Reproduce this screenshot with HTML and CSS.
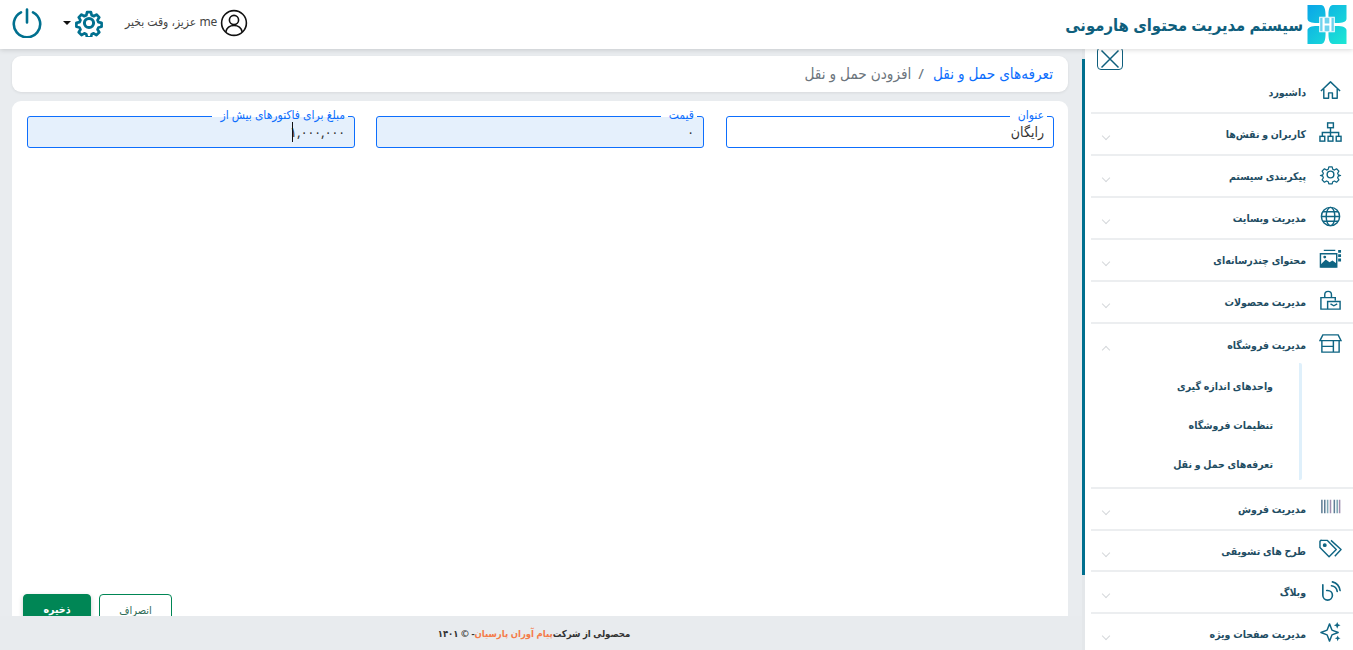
FILE: index.html
```html
<!DOCTYPE html>
<html lang="fa" dir="rtl">
<head>
<meta charset="UTF-8">
<title>سیستم مدیریت محتوای هارمونی</title>
<link rel="stylesheet" href="styles.css">
</head>
<body>
<header class="topbar">
	<div class="brand">
		<svg class="logo" viewBox="0 0 40 40">
			<defs><linearGradient id="lg" gradientUnits="userSpaceOnUse" x1="0" y1="0" x2="40" y2="40"><stop offset="0" stop-color="#0aa5e8"/><stop offset="1" stop-color="#1de8d4"/></linearGradient></defs>
			<path fill="url(#lg)" d="M0 0H14C17 0 18.500 4 18.500 10V12H12V18.500H10C4 18.500 0 17 0 14ZM40 0H26C23 0 21.500 4 21.500 10V12H28V18.500H30C36 18.500 40 17 40 14ZM0 40H14C17 40 18.500 36 18.500 30V28H12V21.500H10C4 21.500 0 23 0 26ZM40 40H26C23 40 21.500 36 21.500 30V28H28V21.500H30C36 21.500 40 23 40 26Z"/>
			<rect x="13" y="13" width="14" height="14" fill="#6fd3ee"/>
			<path fill="none" stroke="#fff" stroke-width="2.200" d="M16.500 13v14M23.500 13v14M16.500 20h7"/>
		</svg>
		<span class="brand-name">سیستم مدیریت محتوای هارمونی</span>
	</div>
	<div class="userbar">
		<svg class="avatar" viewBox="0 0 28 28" fill="none" stroke="#111" stroke-width="1.6">
			<circle cx="14" cy="14" r="12.4"/><circle cx="14" cy="11" r="4.6"/><path d="M5.8 23c1-4.600 4-6.500 8.200-6.500s7.200 1.900 8.200 6.500"/>
		</svg>
		<span class="greeting">me عزیز، وقت بخیر</span>
		<div class="tools">
			<svg class="gear" viewBox="0 0 28 28" fill="none" stroke="#00708f" stroke-width="3" stroke-linejoin="round">
				<circle cx="14" cy="14" r="4.600"/>
				<path d="M11.800 2h4.400l.8 3.500 2.200 1 3.100-1.900 3.100 3.100-1.900 3.100 1 2.200 3.500.8v4.400l-3.500.8-1 2.200 1.900 3.100-3.100 3.100-3.100-1.900-2.200 1-.8 3.500h-4.400l-.8-3.500-2.200-1-3.100 1.900-3.100-3.100 1.900-3.100-1-2.200-3.500-.8v-4.400l3.500-.8 1-2.200-1.900-3.100 3.100-3.100 3.100 1.900 2.200-1z" transform="translate(1.400 1.400) scale(.9)"/>
			</svg>
			<span class="caret-down"></span>
		</div>
		<svg class="power" viewBox="0 0 30 30" fill="none" stroke="#00708f" stroke-width="2.600" stroke-linecap="round">
			<path d="M15 1.500v13M9 4.300a13.200 13.200 0 1 0 12 0"/>
		</svg>
	</div>
</header>

<div class="layout">
	<aside class="sidebar">
		<nav class="nav">
			<div class="close-row">
				<button class="close-btn"><svg viewBox="0 0 20 20" fill="none" stroke="#0f5f7d" stroke-width="1.500"><path d="M1.500 1.500l17 17M18.500 1.500l-17 17"/></svg></button>
			</div>
			<div class="nav-item">
				<svg class="nav-icon" viewBox="0 0 24 24" fill="none" stroke="#0f6583" stroke-width="1.500" stroke-linejoin="round"><path d="M2 12.500L12 3l10 9.500M5 10.500V20h5v-5.500h4V20h5v-9.500"/></svg>
				<span class="nav-label">داشبورد</span>
			</div>
			<div class="nav-item">
				<svg class="nav-icon" viewBox="0 0 24 24" fill="none" stroke="#0f6583" stroke-width="1.500"><rect x="9" y="2" width="6" height="5"/><rect x="1" y="16" width="5" height="5"/><rect x="9.500" y="16" width="5" height="5"/><rect x="18" y="16" width="5" height="5"/><path d="M12 7v9M3.500 16v-4h17v4"/></svg>
				<span class="nav-label">کاربران و نقش‌ها</span>
				<span class="chev"></span>
			</div>
			<div class="nav-item">
				<svg class="nav-icon" viewBox="0 0 24 24" fill="none" stroke="#0f6583" stroke-width="1.500" stroke-linejoin="round"><circle cx="12" cy="12" r="3.500"/><path d="M10 3h4l.7 2.800 2 .9 2.500-1.500 2.800 2.800-1.500 2.500.9 2 2.600.7v0l-2.600.7-.9 2 1.500 2.500-2.800 2.800-2.500-1.500-2 .9-.7 2.600h-4l-.7-2.600-2-.9-2.500 1.500-2.800-2.800 1.500-2.500-.9-2-2.600-.7v0l2.600-.7.900-2-1.500-2.500 2.800-2.800 2.500 1.500 2-.9z" transform="translate(1.500 1.500) scale(.875)"/></svg>
				<span class="nav-label">پیکربندی سیستم</span>
				<span class="chev"></span>
			</div>
			<div class="nav-item">
				<svg class="nav-icon" viewBox="0 0 24 24" fill="none" stroke="#0f6583" stroke-width="1.500"><circle cx="12" cy="12" r="9.500"/><ellipse cx="12" cy="12" rx="4.500" ry="9.500"/><path d="M2.500 12h19M4 7h16M4 17h16"/></svg>
				<span class="nav-label">مدیریت وبسایت</span>
				<span class="chev"></span>
			</div>
			<div class="nav-item">
				<svg class="nav-icon" viewBox="0 0 24 24"><path fill="none" stroke="#0f6583" stroke-width="1.500" d="M1.500 7h17v14h-17zM5 3.500h12"/><path fill="#0f6583" d="M2 21v-3l5-5 4 3 3-2 4 3v4z"/><path fill="#0f6583" d="M20 3h3v3h-3zM20 7.500h3v3h-3zM20 12h3v3h-3z"/><circle cx="6" cy="10.500" r="1.500" fill="#0f6583"/></svg>
				<span class="nav-label">محتوای چندرسانه‌ای</span>
				<span class="chev"></span>
			</div>
			<div class="nav-item">
				<svg class="nav-icon" viewBox="0 0 24 24" fill="none" stroke="#0f6583" stroke-width="1.500"><path d="M9 21H2V9h15v3M6 9V6a3.500 3.500 0 0 1 7 0v3M9 13h13v8H9zM12 15.500l3.500 2 3.500-2"/></svg>
				<span class="nav-label">مدیریت محصولات</span>
				<span class="chev"></span>
			</div>
			<div class="nav-item nav-item-open">
				<div class="nav-row">
					<svg class="nav-icon" viewBox="0 0 24 24" fill="none" stroke="#0f6583" stroke-width="1.500"><path d="M1 9l3-6h16l3 6zM3 9v12h18V9M3 15h12M15 9v12"/></svg>
					<span class="nav-label">مدیریت فروشگاه</span>
					<span class="chev chev-up"></span>
				</div>
				<ul class="subnav">
					<li>واحدهای اندازه گیری</li>
					<li>تنظیمات فروشگاه</li>
					<li>تعرفه‌های حمل و نقل</li>
				</ul>
			</div>
			<div class="nav-item">
				<svg class="nav-icon" viewBox="0 0 24 24"><path fill="none" stroke-width="1.600" stroke="#5f7f96" d="M3 4v14M6 4v14M16 4v14"/><path fill="none" stroke-width="1.600" stroke="#7fa7b5" d="M9 4v14M19 4v14"/><path fill="none" stroke-width="1.600" stroke="#a08fb0" d="M12 4v14M21.500 4v14"/></svg>
				<span class="nav-label">مدیریت فروش</span>
				<span class="chev"></span>
			</div>
			<div class="nav-item nav-item-short">
				<svg class="nav-icon" viewBox="0 0 24 24" fill="none" stroke="#0f6583" stroke-width="1.500" stroke-linejoin="round"><path d="M1 4.500V11l9.500 9.500 7.500-7.500L8.500 3.500H3a2 2 0 0 0-2 1zM12.500 3.500L23 13l-6.500 7"/><circle cx="6" cy="8.500" r="1.300" fill="#0f6583"/></svg>
				<span class="nav-label">طرح های تشویقی</span>
				<span class="chev"></span>
			</div>
			<div class="nav-item">
				<svg class="nav-icon" viewBox="0 0 24 24" fill="none" stroke="#0f6583" stroke-width="1.700" stroke-linecap="round"><path d="M4 6v11a5 5 0 1 0 5-5h-1M13 7a7 7 0 0 1 6 6M14 3a11 11 0 0 1 8 9"/></svg>
				<span class="nav-label">وبلاگ</span>
				<span class="chev"></span>
			</div>
			<div class="nav-item">
				<svg class="nav-icon" viewBox="0 0 24 24" fill="none" stroke="#0f6583" stroke-width="1.500" stroke-linejoin="round"><path d="M10 6l2.500 6.500L19 15l-6.500 2.500L10 24l-2.500-6.500L1 15l6.500-2.500z" transform="translate(1 -3)"/><path fill="#0f6583" stroke="none" d="M19 1l1 2.500 2.500 1-2.500 1-1 2.500-1-2.500-2.500-1 2.500-1zM19.500 15l.9 2.100 2.100.9-2.100.9-.9 2.100-.9-2.100-2.100-.9 2.100-.9z"/></svg>
				<span class="nav-label">مدیریت صفحات ویژه</span>
				<span class="chev"></span>
			</div>
		</nav>
		<div class="scroll-track"><div class="scroll-thumb"></div></div>
	</aside>

	<main class="content">
		<div class="crumbs">
			<a class="crumb-link">تعرفه‌های حمل و نقل</a>
			<span class="crumb-sep">/</span>
			<span class="crumb-current">افزودن حمل و نقل</span>
		</div>
		<section class="form-card">
			<div class="fields">
				<div class="field">
					<label class="field-label">عنوان</label>
					<input class="field-input" value="رایگان">
				</div>
				<div class="field">
					<label class="field-label">قیمت</label>
					<input class="field-input is-filled" value="۰">
				</div>
				<div class="field">
					<label class="field-label">مبلغ برای فاکتورهای بیش از</label>
					<input class="field-input is-filled" value="۱,۰۰۰,۰۰۰">
					<span class="text-caret"></span>
				</div>
			</div>
			<div class="actions">
				<button class="btn btn-cancel">انصراف</button>
				<button class="btn btn-save">ذخیره</button>
			</div>
		</section>
		<footer class="footer">
			محصولی از شرکت<span class="footer-co">پیام آوران پارسیان</span>- © ۱۴۰۱
		</footer>
	</main>
</div>
</body>
</html>
```

FILE: styles.css
```css
*{
	box-sizing:border-box;
	margin:0;
	padding:0;
}

html,body{
	height:100%;
	overflow:hidden;
}

body{
	font-family:"Noto Sans","DejaVu Sans Condensed","DejaVu Sans",sans-serif;
	background:#e9ecef;
	color:#333;
	display:flex;
	flex-direction:column;
}

/* top bar */
.topbar{
	height:49px;
	flex:none;
	background:#fff;
	display:flex;
	justify-content:space-between;
	align-items:center;
	padding:0 6px 4px 12px;
	box-shadow:0 1px 5px rgba(0,0,0,0.15);
	position:relative;
	z-index:5;
}
.brand{
	display:flex;
	align-items:center;
	gap:4px;
	margin-top:4px;
}
.logo{width:40px;height:39px}
.brand-name{
	font-size:16.500px;
	font-weight:bold;
	color:#0f5f7d;
	white-space:nowrap;
}
.userbar{
	display:flex;
	align-items:center;
}
.avatar{width:28px;height:28px}
.greeting{
	font-size:12px;
	line-height:14px;
	color:#444;
	margin:0 3px 2px 0;
	white-space:nowrap;
}
.tools{
	display:flex;
	align-items:center;
	gap:4px;
	margin-right:22px;
}
.gear{width:28px;height:28px}
.caret-down{
	border-top:4px solid #111;
	border-left:4px solid transparent;
	border-right:4px solid transparent;
}
.power{
	width:30px;
	height:30px;
	margin-right:21px;
}

/* layout */
.layout{
	flex:1;
	display:flex;
	min-height:0;
}

/* sidebar */
.sidebar{
	width:271px;
	flex:none;
	background:#fff;
	display:flex;
}
.nav{
	flex:1;
	overflow:hidden;
}
.scroll-track{
	width:3px;
	flex:none;
	background:#e4e7ea;
	padding-top:10px;
}
.scroll-thumb{
	height:516px;
	background:#006f8e;
}
.close-row{
	height:23px;
	display:flex;
	justify-content:flex-end;
	padding-left:12px;
}
.close-btn{
	width:26px;
	height:23px;
	margin-top:-2px;
	background:#fff;
	border:1px solid #0f5f7d;
	border-radius:4px;
	display:flex;
	align-items:center;
	justify-content:center;
}
.close-btn svg{width:20px;height:20px}
.nav-item,.nav-row{
	display:flex;
	align-items:center;
	height:42px;
	padding-right:11px;
	border-bottom:2px solid #eceef0;
	margin-left:6px;
}
.nav-row{
	border-bottom:0;
	padding-right:0;
	margin-left:0;
	width:100%;
}
.nav-item-open{
	display:block;
	height:165px;
}
.nav-item-short{height:41px}
.nav-icon{
	width:23px;
	height:23px;
	flex:none;
	margin-top:-4px;
}
.nav-label{
	font-size:10.500px;
	font-weight:bold;
	color:#1f4d63;
	margin-right:13px;
	white-space:nowrap;
}
.chev{
	margin-right:auto;
	margin-left:12px;
	width:6px;
	height:6px;
	border-right:1.500px solid #d5d8db;
	border-bottom:1.500px solid #d5d8db;
	transform:rotate(45deg);
	position:relative;
	top:2px;
}
.chev-up{
	transform:rotate(225deg);
	top:5px;
}
.subnav{
	list-style:none;
	margin:-3px 40px 0 0;
	padding:4px 26px 0 0;
	border-right:3px solid #dff0fb;
	border-radius:2px;
	height:117px;
}
.subnav li{
	font-size:10.500px;
	font-weight:bold;
	color:#1f4d63;
	height:39px;
	line-height:39px;
	white-space:nowrap;
}

/* content */
.content{
	flex:1;
	min-width:0;
	display:flex;
	flex-direction:column;
	padding:7px 14px 0 12px;
	position:relative;
}
.crumbs{
	height:36px;
	flex:none;
	background:#fff;
	border-radius:9px;
	display:flex;
	align-items:center;
	padding:0 15px 3px;
	font-size:15.200px;
	box-shadow:0 1px 3px rgba(0,0,0,0.08);
}
.crumb-link{color:#0d6efd}
.crumb-sep{color:#6c757d;margin:0 9px 0 7px}
.crumb-current{color:#6c757d}
.form-card{
	flex:1;
	margin-top:9px;
	background:#fff;
	border-radius:9px 9px 0 0;
	padding:15px 14px 0 15px;
	display:flex;
	flex-direction:column;
	justify-content:space-between;
	min-height:0;
}
.fields{
	display:grid;
	grid-template-columns:328px 350px 349px;
}
.field{
	position:relative;
	width:328px;
	justify-self:end;
}
.field-label{
	position:absolute;
	top:-8px;
	right:7px;
	background:#fff;
	padding:0 3px 0 8px;
	font-size:12px;
	line-height:14px;
	color:#0d6efd;
	height:9px;
}
.field-input{
	width:100%;
	height:32px;
	display:block;
	border:1px solid #0d6efd;
	border-radius:3px;
	padding:0 9px 2px;
	font:14px "Noto Sans","DejaVu Sans Condensed","DejaVu Sans",sans-serif;
	color:#333;
	background:#fff;
	outline:none;
}
.is-filled{background:#e5f0fc}
.text-caret{
	position:absolute;
	top:6px;
	left:265px;
	height:20px;
	border-left:1px solid #111;
}
.actions{
	display:flex;
	justify-content:flex-end;
	gap:8px;
	margin:0 0 -22px -4px;
}
.btn{
	width:73px;
	height:44px;
	font-size:11px;
	font-family:inherit;
	border-radius:4px;
	padding-bottom:14px;
}
.btn-save{
	width:68px;
	background:#008655;
	border:1px solid #008655;
	color:#fff;
	font-size:10.500px;
	font-weight:bold;
	box-shadow:0 2px 5px rgba(0,0,0,0.2);
}
.btn-cancel{
	background:#fff;
	border:1px solid #008655;
	color:#2f6d58;
}
.footer{
	height:34px;
	flex:none;
	margin:0 -14px 0 -12px;
	padding-right:14px;
	background:#e8ebee;
	font-size:9.500px;
	font-weight:bold;
	color:#333;
	display:flex;
	align-items:center;
	justify-content:center;
	position:relative;
	z-index:2;
}
.footer-co{color:#f47c4a}
```
